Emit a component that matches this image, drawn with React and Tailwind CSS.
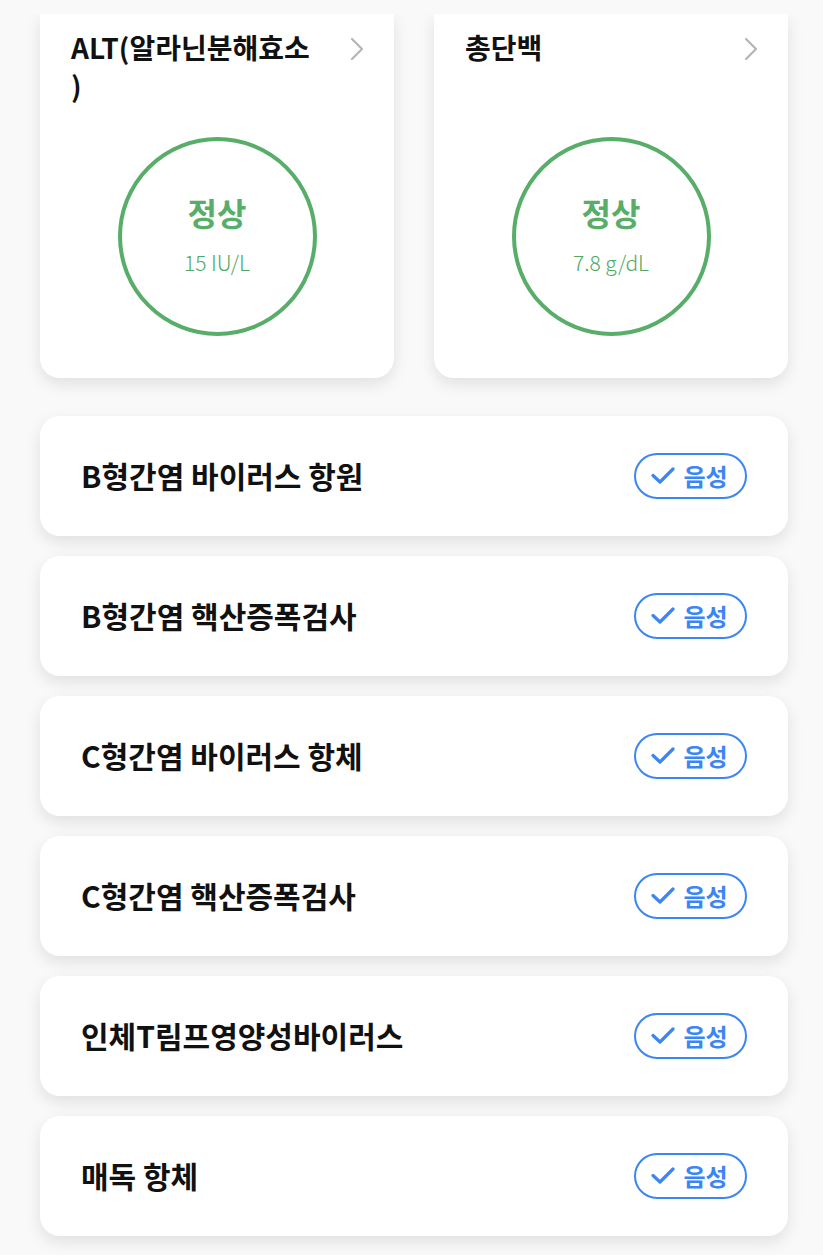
import React from 'react';

const font = { fontFamily: '"Noto Sans CJK KR", "Noto Sans", sans-serif' };

const Chevron = () => (
  <svg width="16" height="24" viewBox="0 0 16 24" fill="none" className="shrink-0 mt-[9px] -mr-[2px]">
    <path d="M3 2 L13 12 L3 22" stroke="#b5b5b5" strokeWidth="2.2" strokeLinecap="round" strokeLinejoin="round" />
  </svg>
);

const Check = () => (
  <svg width="24" height="18" viewBox="0 0 24 18" fill="none">
    <path d="M2 8.5 L9 15 L22 2" stroke="#3b86f4" strokeWidth="3.2" strokeLinecap="round" strokeLinejoin="round" />
  </svg>
);

const SummaryCard = ({ title, status, value }) => (
  <div className="w-[354px] h-[364px] bg-white rounded-b-[20px] shadow-[0_6px_16px_rgba(0,0,0,0.10)] flex flex-col px-[31px] pt-[14px]">
    <div className="flex justify-between items-start h-[86px]">
      <div className="text-[28px] font-bold leading-[38px] text-[#111] whitespace-pre-line">{title}</div>
      <Chevron />
    </div>
    <div className="flex justify-center mt-[23px]">
      <div className="w-[199px] h-[199px] rounded-full border-[4px] border-[#58ad69] flex flex-col items-center justify-center">
        <div className="text-[32px] font-bold leading-none text-[#58ad69] -mt-[4px]">{status}</div>
        <div className="text-[21px] font-light leading-none text-[#4fa864] mt-[24px]">{value}</div>
      </div>
    </div>
  </div>
);

const Row = ({ label }) => (
  <div className="h-[120px] bg-white rounded-[20px] shadow-[0_6px_16px_rgba(0,0,0,0.10)] flex items-center justify-between pl-[41px] pr-[41px]">
    <div className="text-[30px] font-bold text-[#111] leading-none -mt-[3px]">{label}</div>
    <div className="w-[113px] h-[46px] rounded-full border-2 border-[#3b86f4] flex items-center justify-center gap-[8px] pr-[2px]">
      <Check />
      <span className="text-[24px] font-bold text-[#3b86f4] leading-none">음성</span>
    </div>
  </div>
);

export default function App() {
  const rows = [
    'B형간염 바이러스 항원',
    'B형간염 핵산증폭검사',
    'C형간염 바이러스 항체',
    'C형간염 핵산증폭검사',
    '인체T림프영양성바이러스',
    '매독 항체',
  ];
  return (
    <div className="w-[823px] h-[1255px] bg-[#f9f9f9] pt-[14px] overflow-hidden" style={font}>
      <div className="h-[1241px] overflow-hidden">
        <div className="w-[748px] ml-[40px] flex flex-col">
          <div className="flex gap-[40px]">
            <SummaryCard title={'ALT(알라닌분해효소\n)'} status="정상" value="15 IU/L" />
            <SummaryCard title="총단백" status="정상" value="7.8 g/dL" />
          </div>
          <div className="flex flex-col gap-[20px] mt-[38px]">
            {rows.map((r) => (
              <Row key={r} label={r} />
            ))}
          </div>
        </div>
      </div>
    </div>
  );
}
